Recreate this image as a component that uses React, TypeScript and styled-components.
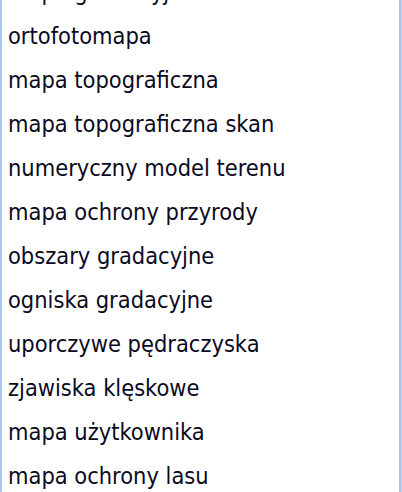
import * as React from "react";
import styled, { createGlobalStyle } from "styled-components";

const GlobalStyle = createGlobalStyle`
  html, body {
    margin: 0;
    padding: 0;
    background: #ffffff;
  }
`;

const Frame = styled.div`
  box-sizing: border-box;
  width: 401px;
  height: 492px;
  overflow: hidden;
  background: #ffffff;
  border-left: 2px solid #a5c4f3;
  border-right: 2px solid #a5c4f3;
  box-shadow: 1px 0 0 #c9d3df;
`;

const List = styled.ul`
  list-style: none;
  margin: -30px 0 0 0;
  padding: 0;
`;

const Item = styled.li`
  height: 44px;
  line-height: 44px;
  padding-left: 6px;
  font-family: "DejaVu Sans Condensed", "DejaVu Sans", sans-serif;
  font-stretch: semi-condensed;
  font-size: 23.4px;
  color: #0a0a1e;
  white-space: nowrap;
`;

const layers = [
  "mapa geodezyjna",
  "ortofotomapa",
  "mapa topograficzna",
  "mapa topograficzna skan",
  "numeryczny model terenu",
  "mapa ochrony przyrody",
  "obszary gradacyjne",
  "ogniska gradacyjne",
  "uporczywe pędraczyska",
  "zjawiska klęskowe",
  "mapa użytkownika",
  "mapa ochrony lasu",
];

export default function App() {
  return (
    <>
      <GlobalStyle />
      <Frame>
        <List>
          {layers.map((name) => (
            <Item key={name}>{name}</Item>
          ))}
        </List>
      </Frame>
    </>
  );
}
